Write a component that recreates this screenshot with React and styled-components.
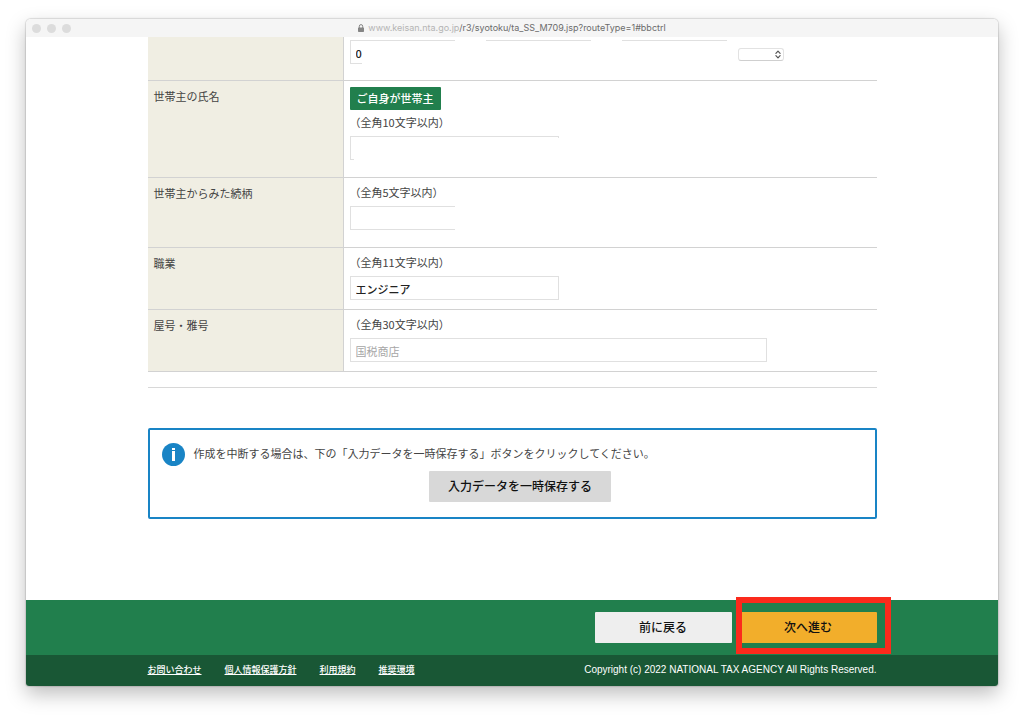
import React, { useState } from "react";
import styled, { createGlobalStyle, css } from "styled-components";

const links = ["お問い合わせ", "個人情報保護方針", "利用規約", "推奨環境"];

const App = () => {
  const [job, setJob] = useState("エンジニア");
  const [shop, setShop] = useState("");

  return (
    <>
      <GlobalStyle />
      <Browser>
        <TitleBar>
          <Lights>
            <i />
            <i />
            <i />
          </Lights>
          <Address>
            <LockIcon />
            <p>
              <span>www.keisan.nta.go.jp</span>
              /r3/syotoku/ta_SS_M709.jsp?routeType=1#bbctrl
            </p>
          </Address>
        </TitleBar>

        <main>
          <Content>
            <Row>
              <LabelCell />
              <FieldCell $first>
                <Phones>
                  <Field $size="small">
                    <TextInput aria-label="電話番号1" defaultValue="0" />
                    <Cover $top={1} $left={12} />
                  </Field>
                  <Field $size="small">
                    <TextInput aria-label="電話番号2" />
                    <Cover $top={1} $left={0} />
                  </Field>
                  <Field $size="small">
                    <TextInput aria-label="電話番号3" />
                    <Cover $top={1} $left={0} />
                  </Field>
                  <SelectBox>
                    <select aria-label="電話番号の種類">
                      <option></option>
                    </select>
                    <UpDownIcon />
                  </SelectBox>
                </Phones>
              </FieldCell>
            </Row>

            <Row>
              <LabelCell>
                <label htmlFor="head">世帯主の氏名</label>
              </LabelCell>
              <FieldCell $tall>
                <SelfButton type="button">ご自身が世帯主</SelfButton>
                <Hint>（全角10文字以内）</Hint>
                <Field $size="medium">
                  <TextInput id="head" />
                  <Cover $top={2} $left={4} />
                </Field>
              </FieldCell>
            </Row>

            <Row>
              <LabelCell>
                <label htmlFor="relation">世帯主からみた続柄</label>
              </LabelCell>
              <FieldCell $tall>
                <Hint>（全角5文字以内）</Hint>
                <Field $size="small">
                  <TextInput id="relation" $open />
                </Field>
              </FieldCell>
            </Row>

            <Row>
              <LabelCell>
                <label htmlFor="job">職業</label>
              </LabelCell>
              <FieldCell>
                <Hint>（全角11文字以内）</Hint>
                <Field $size="medium">
                  <TextInput
                    id="job"
                    value={job}
                    onChange={(e) => setJob(e.target.value)}
                  />
                </Field>
              </FieldCell>
            </Row>

            <Row>
              <LabelCell>
                <label htmlFor="shop">屋号・雅号</label>
              </LabelCell>
              <FieldCell>
                <Hint>（全角30文字以内）</Hint>
                <Field $size="large">
                  <TextInput
                    id="shop"
                    placeholder="国税商店"
                    value={shop}
                    onChange={(e) => setShop(e.target.value)}
                  />
                </Field>
              </FieldCell>
            </Row>

            <Divider />

            <InfoBox>
              <div className="message">
                <InfoIcon />
                <p>
                  作成を中断する場合は、下の「入力データを一時保存する」ボタンをクリックしてください。
                </p>
              </div>
              <Button type="button" $kind="save">
                入力データを一時保存する
              </Button>
            </InfoBox>
          </Content>
        </main>

        <ActionBar>
          <Actions>
            <Button type="button" $kind="back">
              前に戻る
            </Button>
            <Highlight>
              <Button type="button" $kind="next">
                次へ進む
              </Button>
            </Highlight>
          </Actions>
        </ActionBar>

        <Footer>
          <FooterInner>
            <nav>
              {links.map((link) => (
                <a href="#" key={link}>
                  {link}
                </a>
              ))}
            </nav>
            <small>
              Copyright (c) 2022 NATIONAL TAX AGENCY All Rights Reserved.
            </small>
          </FooterInner>
        </Footer>
      </Browser>
    </>
  );
};

export default App;

const LockIcon = () => (
  <svg width="6" height="8" viewBox="0 0 6 8" aria-hidden="true">
    <path d="M1.3 4V2.3a1.7 1.7 0 0 1 3.4 0V4" fill="none" stroke="#858585" />
    <rect y="3.4" width="6" height="4.6" rx="0.7" fill="#858585" />
  </svg>
);

const UpDownIcon = () => (
  <svg width="6" height="9" viewBox="0 0 6 9" aria-hidden="true">
    <path
      d="M0.9 3.3 3 1.1l2.1 2.2M0.9 5.7 3 7.9l2.1-2.2"
      fill="none"
      stroke="#555"
      strokeWidth="1.2"
      strokeLinecap="round"
      strokeLinejoin="round"
    />
  </svg>
);

const InfoIcon = () => (
  <svg width="23" height="23" viewBox="0 0 23 23" aria-hidden="true">
    <circle cx="11.5" cy="11.5" r="11.5" fill="#1984c5" />
    <rect x="10" y="5" width="3" height="2" fill="#fff" />
    <rect x="10" y="8" width="3" height="10" fill="#fff" />
  </svg>
);

const GlobalStyle = createGlobalStyle`
  * {
    box-sizing: border-box;
  }

  body {
    margin: 0;
    background: #fff;
    color: #444;
    font-family: "Noto Sans CJK JP", sans-serif;
    font-size: 11px;
    line-height: 16px;
  }

  p {
    margin: 0;
  }

  button,
  input,
  select {
    font-family: inherit;
    margin: 0;
  }
`;

const Browser = styled.div`
  margin: 19px 26px 32px;
  border-radius: 5px 5px 3px 3px;
  background: #fff;
  box-shadow: 0 0 1px 1px rgba(0, 0, 0, 0.12), 0 8px 20px rgba(0, 0, 0, 0.26);
`;

const TitleBar = styled.header`
  display: grid;
  grid-template-columns: 1fr auto 1fr;
  align-items: center;
  height: 18px;
  padding: 0 6px;
  border-radius: 5px 5px 0 0;
  background: #f5f5f5;
`;

const Lights = styled.div`
  display: flex;
  gap: 6px;

  i {
    width: 9px;
    height: 9px;
    border-radius: 50%;
    background: #dcdcdc;
  }
`;

const Address = styled.div`
  display: flex;
  align-items: center;
  gap: 4px;
  font-family: Inter, sans-serif;
  font-size: 9px;
  color: #6c6c6c;
  white-space: nowrap;

  span {
    color: #b4b4b4;
  }
`;

const Content = styled.div`
  width: 75%;
  margin: 0 auto;
  padding-bottom: 81px;
`;

const Row = styled.div`
  display: grid;
  grid-template-columns: 196px 1fr;
  border-bottom: 1px solid #d2d2d2;
`;

const LabelCell = styled.div`
  padding: 7px 6px;
  border-right: 1px solid #d2d2d2;
  background: #f0eee3;
`;

const FieldCell = styled.div`
  padding: 6px 6px ${(props) => (props.$tall ? "17px" : "9px")};

  ${(props) =>
    props.$first &&
    css`
      padding: 3px 6px 16px;
    `}
`;

const Hint = styled.p`
  margin-bottom: 6px;
`;

const SelfButton = styled.button`
  display: block;
  height: 23px;
  margin-bottom: 4px;
  padding: 0 7px 2px;
  border: none;
  border-radius: 1px;
  background: #217f4d;
  color: #fff;
  font-size: 11px;
  font-weight: 500;
  line-height: 16px;
  cursor: pointer;
`;

const Phones = styled.div`
  display: flex;
  align-items: flex-start;
  gap: 31px;
`;

const sizes = { small: "105px", medium: "209px", large: "417px" };

const Field = styled.div`
  position: relative;
  width: ${(props) => sizes[props.$size]};
  height: 24px;
`;

const TextInput = styled.input`
  display: block;
  width: 100%;
  height: 24px;
  padding: 2px 5px 0;
  border: 1px solid #e0e0e0;
  border-radius: 0;
  background: #fff;
  color: #222;
  font-size: 11px;
  font-weight: 500;
  outline: none;

  ${(props) =>
    props.$open &&
    css`
      border-right: none;
    `}

  &::placeholder {
    color: #a6a6a6;
    font-weight: 400;
  }
`;

// white patch that hides the personal data in a field
const Cover = styled.div`
  position: absolute;
  top: ${(props) => props.$top}px;
  left: ${(props) => props.$left}px;
  right: 0;
  bottom: 0;
  background: #fff;
`;

const SelectBox = styled.div`
  position: relative;
  width: 46px;
  margin: 8px 0 0 -20px;

  select {
    display: block;
    appearance: none;
    width: 100%;
    height: 13px;
    padding: 0 12px 0 4px;
    border: 1px solid #e2e2e2;
    border-bottom-color: #cfcfcf;
    border-radius: 3px;
    background: #fff;
    font-size: 9px;
  }

  svg {
    position: absolute;
    top: 2px;
    right: 3px;
    pointer-events: none;
  }
`;

const Divider = styled.hr`
  margin: 15px 0 40px;
  border: none;
  border-top: 1px solid #d8d8d8;
`;

const InfoBox = styled.section`
  display: flex;
  flex-direction: column;
  align-items: center;
  gap: 5px;
  padding: 13px 12px 15px;
  border: 2px solid #1984c5;
  border-radius: 2px;

  .message {
    display: flex;
    align-items: flex-start;
    gap: 9px;
    width: 100%;
  }

  .message p {
    padding-top: 2px;
  }
`;

const kinds = {
  save: css`
    width: 182px;
    margin-left: 16px;
    background: #d8d8d8;
  `,
  back: css`
    width: 137px;
    background: #eee;
  `,
  next: css`
    width: 137px;
    background: #f2ae2b;
  `,
};

const Button = styled.button`
  display: block;
  height: 31px;
  padding: 0 0 2px;
  border: none;
  border-radius: 1px;
  color: #111;
  font-size: 12px;
  font-weight: 500;
  line-height: 16px;
  cursor: pointer;
  ${(props) => kinds[props.$kind]}
`;

const ActionBar = styled.div`
  padding: 12px 0;
  background: #217f4d;
`;

const Actions = styled.div`
  display: flex;
  justify-content: flex-end;
  gap: 8px;
  width: 75%;
  margin: 0 auto;
`;

const Highlight = styled.div`
  position: relative;

  &::after {
    content: "";
    position: absolute;
    top: -15px;
    right: -14px;
    bottom: -11px;
    left: -4px;
    border: 6px solid #fb2a1c;
    pointer-events: none;
  }
`;

const Footer = styled.footer`
  padding: 7px 0 8px;
  border-radius: 0 0 3px 3px;
  background: #195735;
`;

const FooterInner = styled.div`
  display: flex;
  justify-content: space-between;
  align-items: center;
  width: 75%;
  margin: 0 auto;
  color: #fff;

  nav {
    display: flex;
    gap: 23px;
  }

  a {
    color: #fff;
    font-size: 9px;
    font-weight: 500;
  }

  small {
    font-family: "Liberation Sans", sans-serif;
    font-size: 10px;
  }
`;
